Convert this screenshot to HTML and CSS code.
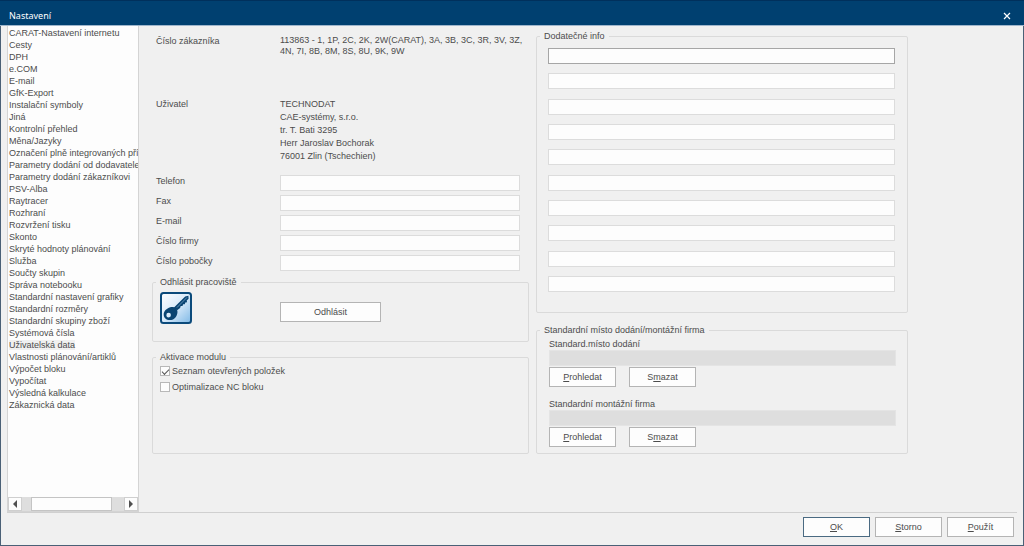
FILE: index.html
```html
<!DOCTYPE html>
<html lang="cs">
<head>
<meta charset="utf-8">
<meta name="viewport" content="width=device-width, initial-scale=1">
<title>Nastavení</title>
<link rel="stylesheet" href="styles.css">
</head>
<body>
<div class="window">
  <header class="titlebar">
    <h1 class="title">Nastavení</h1>
    <button class="close" type="button" aria-label="Zavřít">
      <svg width="8" height="8" viewBox="0 0 8 8" aria-hidden="true"><path d="M1 1l6 6M7 1L1 7" fill="none" stroke="#fff" stroke-width="1.2"/></svg>
    </button>
  </header>

  <div class="content">
    <nav class="sidebar" aria-label="Oblasti nastavení">
      <ul class="list">
        <li><a href="#">CARAT-Nastavení internetu</a></li>
        <li><a href="#">Cesty</a></li>
        <li><a href="#">DPH</a></li>
        <li><a href="#">e.COM</a></li>
        <li><a href="#">E-mail</a></li>
        <li><a href="#">GfK-Export</a></li>
        <li><a href="#">Instalační symboly</a></li>
        <li><a href="#">Jiná</a></li>
        <li><a href="#">Kontrolní přehled</a></li>
        <li><a href="#">Měna/Jazyky</a></li>
        <li><a href="#">Označení plně integrovaných přís</a></li>
        <li><a href="#">Parametry dodání od dodavatele</a></li>
        <li><a href="#">Parametry dodání zákazníkovi</a></li>
        <li><a href="#">PSV-Alba</a></li>
        <li><a href="#">Raytracer</a></li>
        <li><a href="#">Rozhraní</a></li>
        <li><a href="#">Rozvržení tisku</a></li>
        <li><a href="#">Skonto</a></li>
        <li><a href="#">Skryté hodnoty plánování</a></li>
        <li><a href="#">Služba</a></li>
        <li><a href="#">Součty skupin</a></li>
        <li><a href="#">Správa notebooku</a></li>
        <li><a href="#">Standardní nastavení grafiky</a></li>
        <li><a href="#">Standardní rozměry</a></li>
        <li><a href="#">Standardní skupiny zboží</a></li>
        <li><a href="#">Systémová čísla</a></li>
        <li><a href="#" class="current" aria-current="page">Uživatelská data</a></li>
        <li><a href="#">Vlastnosti plánování/artiklů</a></li>
        <li><a href="#">Výpočet bloku</a></li>
        <li><a href="#">Vypočítat</a></li>
        <li><a href="#">Výsledná kalkulace</a></li>
        <li><a href="#">Zákaznická data</a></li>
      </ul>
      <div class="scrollbar">
        <button class="scroll-step" type="button" aria-label="Posunout vlevo"><svg width="4" height="8" viewBox="0 0 4 8" aria-hidden="true"><path d="M4 0v8L0 4z" fill="#505050"/></svg></button>
        <div class="scroll-track"><div class="scroll-thumb"></div></div>
        <button class="scroll-step" type="button" aria-label="Posunout vpravo"><svg width="4" height="8" viewBox="0 0 4 8" aria-hidden="true"><path d="M0 0v8l4-4z" fill="#505050"/></svg></button>
      </div>
    </nav>

    <main class="form">
      <section class="column">
        <dl class="facts">
          <dt>Číslo zákazníka</dt>
          <dd class="numbers">113863 - 1, 1P, 2C, 2K, 2W(CARAT), 3A, 3B, 3C, 3R, 3V, 3Z, 4N, 7I, 8B, 8M, 8S, 8U, 9K, 9W</dd>
          <dt>Uživatel</dt>
          <dd class="address">TECHNODAT<br>CAE-systémy, s.r.o.<br>tr. T. Bati 3295<br>Herr Jaroslav Bochorak<br>76001 Zlin (Tschechien)</dd>
        </dl>
        <div class="fields">
          <label for="phone">Telefon</label><input class="field" id="phone" type="text">
          <label for="fax">Fax</label><input class="field" id="fax" type="text">
          <label for="email">E-mail</label><input class="field" id="email" type="text">
          <label for="company">Číslo firmy</label><input class="field" id="company" type="text">
          <label for="branch">Číslo pobočky</label><input class="field" id="branch" type="text">
        </div>
        <fieldset class="group logout">
          <legend>Odhlásit pracoviště</legend>
          <div class="logout-row">
            <svg class="key" width="32" height="32" viewBox="0 0 32 32" aria-hidden="true">
              <defs><linearGradient id="sky" x1="0" y1="0" x2="1" y2="1"><stop offset="0" stop-color="#fff"/><stop offset=".5" stop-color="#d9eafa"/><stop offset="1" stop-color="#7fb9e6"/></linearGradient></defs>
              <rect x="1" y="1" width="30" height="30" rx="2.5" fill="url(#sky)" stroke="#0b4a7b" stroke-width="2"/>
              <path d="M13.500 16L25.200 4.600l3.200-.9.200 3-1.900 1.900.4 1.600-1.800.3-.5 1.800-1.700-.1-.6 1.900-1.800 0-.6 1.800-3 2.300z" fill="#0a4472"/>
              <path d="M17 15.500L27 5.400" stroke="#86b2d4" stroke-width=".7"/>
              <path fill-rule="evenodd" d="M10.200 15.200c2.200-.7 4.500-.2 6 1.500 1.500 1.500 1.600 3.700.8 5.700-1 3.200-3.600 5.600-7 5.700-3.600.1-6.300-2.300-6.300-5.600 0-3.400 2.800-6.200 6.500-7.300zM8.600 20.800a2.300 2.300 0 1 0 .1 4.600 2.300 2.300 0 0 0-.1-4.600z" fill="#0a4472"/>
            </svg>
            <button class="button wide" type="button">Odhlásit</button>
          </div>
        </fieldset>
        <fieldset class="group modules">
          <legend>Aktivace modulu</legend>
          <label class="check"><input type="checkbox" checked>Seznam otevřených položek</label>
          <label class="check"><input type="checkbox">Optimalizace NC bloku</label>
        </fieldset>
      </section>

      <section class="column">
        <fieldset class="group extra">
          <legend>Dodatečné info</legend>
          <div class="extra-list">
            <input class="field active" type="text" aria-label="Dodatečné info 1">
            <input class="field" type="text" aria-label="Dodatečné info 2">
            <input class="field" type="text" aria-label="Dodatečné info 3">
            <input class="field" type="text" aria-label="Dodatečné info 4">
            <input class="field" type="text" aria-label="Dodatečné info 5">
            <input class="field" type="text" aria-label="Dodatečné info 6">
            <input class="field" type="text" aria-label="Dodatečné info 7">
            <input class="field" type="text" aria-label="Dodatečné info 8">
            <input class="field" type="text" aria-label="Dodatečné info 9">
            <input class="field" type="text" aria-label="Dodatečné info 10">
          </div>
        </fieldset>
        <fieldset class="group places">
          <legend>Standardní místo dodání/montážní firma</legend>
          <div class="place">
            <label for="delivery">Standard.místo dodání</label>
            <input class="field" id="delivery" type="text" disabled>
            <div class="place-buttons">
              <button class="button" type="button"><u>P</u>rohledat</button>
              <button class="button" type="button">S<u>m</u>azat</button>
            </div>
          </div>
          <div class="place">
            <label for="assembly">Standardní montážní firma</label>
            <input class="field" id="assembly" type="text" disabled>
            <div class="place-buttons">
              <button class="button" type="button"><u>P</u>rohledat</button>
              <button class="button" type="button">S<u>m</u>azat</button>
            </div>
          </div>
        </fieldset>
      </section>
    </main>
  </div>

  <footer class="footer">
    <button class="button default" type="button"><u>O</u>K</button>
    <button class="button" type="button"><u>S</u>torno</button>
    <button class="button" type="button"><u>P</u>oužít</button>
  </footer>
</div>
</body>
</html>
```
FILE: styles.css
```css
* {
  box-sizing: border-box;
}

body {
  margin: 0;
  background: #f0f0f0;
  color: #4c4c4c;
  font: 9px/12px "Liberation Sans", Arial, sans-serif;
}

button,
input {
  font: inherit;
  color: inherit;
}

.window {
  display: flex;
  flex-direction: column;
  min-height: 100vh;
  border: 1px solid #4a6076;
  border-top: 0;
}

.titlebar {
  display: flex;
  align-items: center;
  justify-content: space-between;
  height: 26px;
  padding: 5px 12px 0 9px;
  background: #004070;
  border-top: 1px solid #00305c;
  border-bottom: 1px solid #9fb6cc;
  margin: 0 -1px;
  color: #fff;
}

.title {
  margin: 0;
  font: 9px/14px "Noto Sans", "Open Sans", sans-serif;
}

.close {
  display: flex;
  padding: 1px;
  border: 0;
  background: none;
}

.content {
  display: flex;
  flex: 1;
  margin: 0 6px;
  border-bottom: 1px solid #d0d0d0;
}

.sidebar {
  display: flex;
  flex: none;
  flex-direction: column;
  width: 132px;
  background: #fdfdfd;
  border: 1px solid #d4d4d4;
  border-top: 0;
}

.list {
  flex: 1;
  margin: 0;
  padding: 1px 0 0 1px;
  overflow: hidden;
  list-style: none;
  white-space: nowrap;
}

.list a {
  color: inherit;
  text-decoration: none;
}

.list .current {
  background: #f0f0f0;
}

.scrollbar {
  display: flex;
  height: 14px;
}

.scroll-step {
  display: flex;
  align-items: center;
  justify-content: center;
  width: 14px;
  padding: 0;
  background: #fdfdfd;
  border: 1px solid #cfcfcf;
}

.scroll-track {
  display: flex;
  flex: 1;
  padding: 0 12px 0 9px;
  background: #dedede;
}

.scroll-thumb {
  flex: 1;
  background: #fdfdfd;
  border: 1px solid #c4c4c4;
}

.form {
  display: grid;
  flex: 1;
  grid-template-columns: minmax(0, 377fr) minmax(0, 372fr);
  gap: 7px;
  align-items: stretch;
  align-content: start;
  padding: 4px 109px 16px 13px;
}

.column {
  display: flex;
  flex-direction: column;
}

.facts,
.fields {
  display: grid;
  grid-template-columns: 124px minmax(0, 1fr);
  margin: 0;
  padding: 0 9px 0 4px;
}

.facts {
  grid-template-rows: 63px 70px;
  padding: 5px 0 0 4px;
}

.facts dd {
  margin: 0;
}

.numbers {
  line-height: 11px;
}

.address {
  line-height: 13px;
}

.fields {
  row-gap: 4px;
  margin-top: 7px;
  line-height: 12px;
}

.field {
  display: block;
  width: 100%;
  height: 16px;
  padding: 0 3px;
  background: #fdfdfd;
  border: 1px solid #dcdcdc;
  border-radius: 0;
}

.field.active {
  border-color: #a6a6a6;
}

.field:disabled {
  background: #dedede;
  border-color: #e4e4e4;
}

.group {
  min-width: 0;
  margin: 0;
  padding: 0 7px;
  border: 1px solid #dadada;
  border-radius: 2px;
}

.group legend {
  margin-left: -4px;
  padding: 0 4px;
}

.logout {
  min-height: 66px;
  margin-top: 5px;
}

.logout-row {
  display: flex;
  gap: 88px;
  align-items: center;
  padding-top: 4px;
}

.button {
  width: 67px;
  height: 20px;
  padding: 0;
  background: #fdfdfd;
  border: 1px solid #b4b4b4;
  border-radius: 0;
  text-align: center;
}

.button.wide {
  width: 101px;
  margin-top: 8px;
}

.button.default {
  border-color: #4a6a82;
}

.modules {
  min-height: 103px;
  margin-top: 9px;
}

.check {
  display: flex;
  gap: 2px;
  align-items: center;
  height: 16px;
}

.check input {
  display: grid;
  place-items: center;
  width: 10px;
  height: 10px;
  margin: 0;
  appearance: none;
  background: #fdfdfd;
  border: 1px solid #b8b8b8;
}

.check input:checked::before {
  content: "";
  width: 6px;
  height: 3px;
  border: solid #555;
  border-width: 0 0 1px 1px;
  transform: rotate(-45deg);
}

.extra {
  flex: 1;
  display: flex;
  flex-direction: column;
  padding: 6px 12px 20px 11px;
}

.extra legend {
  margin-left: -8px;
}

.extra-list {
  display: flex;
  flex: 1;
  flex-direction: column;
  justify-content: space-between;
}

.places {
  display: flex;
  flex-direction: column;
  gap: 11px;
  margin-top: 11px;
  padding: 2px 11px 6px 12px;
}

.places legend {
  margin-left: -9px;
}

.place label {
  display: block;
}

.place-buttons {
  display: flex;
  gap: 13px;
  margin-top: 1px;
}

.footer {
  display: flex;
  gap: 5px;
  justify-content: flex-end;
  padding: 4px 9px 8px;
}
```
